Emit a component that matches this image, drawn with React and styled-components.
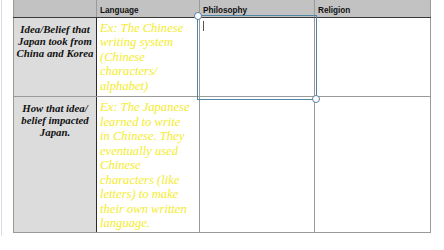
import React from "react";
import styled, { createGlobalStyle } from "styled-components";

const Global = createGlobalStyle`
  html, body { margin: 0; padding: 0; background: #fff; }
  body { width: 444px; height: 250px; overflow: hidden; }
`;

const Page = styled.div`
  position: relative;
  width: 444px;
  height: 250px;
  display: flex;
  padding-left: 13px;
  box-sizing: border-box;
`;

const PageEdge = styled.div`
  position: absolute;
  left: 1px;
  top: 0;
  width: 1px;
  height: 236px;
  background: #d6dde6;
`;

const Table = styled.table`
  border-collapse: collapse;
  table-layout: fixed;
  width: 417px;
  height: 233px;
  align-self: flex-start;
`;

const HeadCell = styled.th`
  height: 17px;
  box-sizing: border-box;
  background: #c2c2c2;
  border-left: 1px solid #9a9a9a;
  border-bottom: 1px solid #3a3a3a;
  font-family: "Liberation Sans", Arial, sans-serif;
  font-weight: bold;
  font-size: 8.2px;
  line-height: 10px;
  color: #111;
  text-align: left;
  padding: 6px 0 0 3px;
  vertical-align: top;
  &:last-child { border-right: 1px solid #9a9a9a; }
`;

const LabelCell = styled.td`
  background: #dcdcdc;
  border: 1px solid #9a9a9a;
  border-right: 1px solid #2a2a2a;
  font-family: "Liberation Serif", "Times New Roman", serif;
  font-style: italic;
  font-weight: bold;
  font-size: 10.8px;
  line-height: 12px;
  color: #111;
  text-align: center;
  vertical-align: top;
  padding: 5px 1px 0 1px;
`;

const Cell = styled.td`
  border: 1px solid #9a9a9a;
  vertical-align: top;
  padding: 3px 2px 0 3px;
  font-family: "Liberation Serif", "Times New Roman", serif;
  font-style: italic;
  font-size: 12.6px;
  line-height: 14.5px;
  color: #f4ec2c;
  position: relative;
  white-space: nowrap;
`;

const Selection = styled.div`
  position: absolute;
  left: -3px;
  top: -3px;
  width: 120px;
  height: 85px;
  border: 1px solid #4f86a6;
  box-sizing: border-box;
  pointer-events: none;
`;

const Handle = styled.span`
  position: absolute;
  width: 6px;
  height: 6px;
  border-radius: 50%;
  background: #fff;
  border: 1px solid #5c7fa0;
  ${(p) => (p.$corner === "tl" ? "left: -4px; top: -4px;" : "right: -4px; bottom: -4px;")}
`;

const Caret = styled.div`
  position: absolute;
  left: 5px;
  top: 5px;
  width: 1px;
  height: 10px;
  background: #555;
`;

export default function App() {
  return (
    <>
      <Global />
      <Page>
        <PageEdge />
        <Table>
          <colgroup>
            <col style={{ width: 83 }} />
            <col style={{ width: 103 }} />
            <col style={{ width: 115 }} />
            <col style={{ width: 116 }} />
          </colgroup>
          <thead>
            <tr>
              <HeadCell></HeadCell>
              <HeadCell>Language</HeadCell>
              <HeadCell>Philosophy</HeadCell>
              <HeadCell>Religion</HeadCell>
            </tr>
          </thead>
          <tbody>
            <tr style={{ height: 79 }}>
              <LabelCell>
                Idea/Belief that
                <br />
                Japan took from
                <br />
                China and Korea
              </LabelCell>
              <Cell>
                Ex: The Chinese
                <br />
                writing system
                <br />
                (Chinese
                <br />
                characters/
                <br />
                alphabet)
              </Cell>
              <Cell>
                <Selection>
                  <Handle $corner="tl" />
                  <Handle $corner="br" />
                  <Caret />
                </Selection>
              </Cell>
              <Cell></Cell>
            </tr>
            <tr style={{ height: 135 }}>
              <LabelCell>
                How that idea/
                <br />
                belief impacted
                <br />
                Japan.
              </LabelCell>
              <Cell>
                Ex: The Japanese
                <br />
                learned to write
                <br />
                in Chinese. They
                <br />
                eventually used
                <br />
                Chinese
                <br />
                characters (like
                <br />
                letters) to make
                <br />
                their own written
                <br />
                language.
              </Cell>
              <Cell></Cell>
              <Cell></Cell>
            </tr>
          </tbody>
        </Table>
      </Page>
    </>
  );
}
